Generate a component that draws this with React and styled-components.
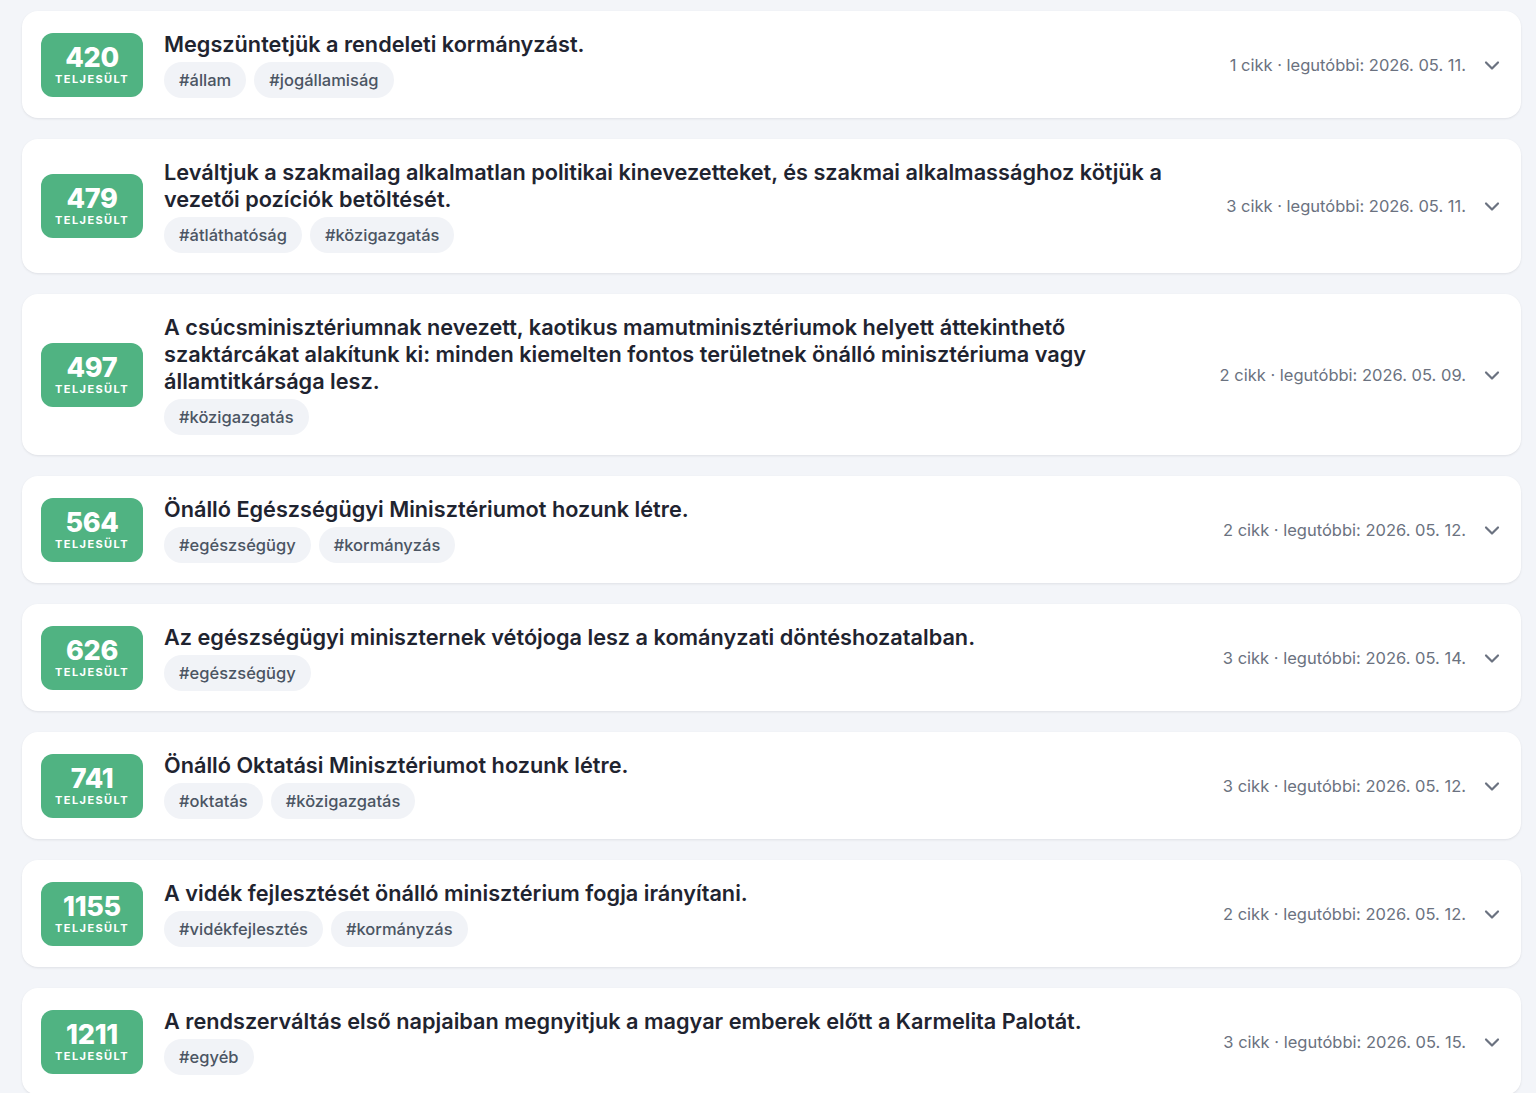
import React from "react";
import styled, { createGlobalStyle } from "styled-components";

const GlobalStyle = createGlobalStyle`
  html, body {
    margin: 0;
    padding: 0;
    background: #f3f5f9;
    font-family: Inter, "Noto Sans", "Liberation Sans", sans-serif;
    -webkit-font-smoothing: antialiased;
  }
`;

const List = styled.div`
  display: flex;
  flex-direction: column;
  gap: 21px;
  padding: 11px 15px 24px 22px;
`;

const Card = styled.div`
  display: flex;
  align-items: center;
  background: #ffffff;
  border-radius: 16px;
  box-shadow: 0 1px 3px rgba(16, 24, 40, 0.06), 0 1px 2px rgba(16, 24, 40, 0.03);
  padding: 20px 17px 20px 19px;
`;

const Badge = styled.div`
  flex: none;
  width: 102px;
  height: 64px;
  border-radius: 12px;
  background: #50b382;
  color: #ffffff;
  display: flex;
  flex-direction: column;
  align-items: center;
  justify-content: center;
`;

const BadgeNumber = styled.div`
  font-size: 27px;
  font-weight: 800;
  line-height: 27px;
  letter-spacing: -0.3px;
`;

const BadgeLabel = styled.div`
  font-size: 11px;
  font-weight: 700;
  letter-spacing: 1.4px;
  line-height: 13px;
  margin-top: 2px;
`;

const Body = styled.div`
  flex: 1;
  min-width: 0;
  margin-left: 21px;
  display: flex;
  flex-direction: column;
  gap: 4px;
`;

const Title = styled.div`
  font-size: 21.7px;
  font-weight: 600;
  line-height: 27px;
  color: #1f2430;
`;

const Tags = styled.div`
  display: flex;
  flex-wrap: wrap;
  gap: 8px;
`;

const Tag = styled.span`
  display: inline-flex;
  align-items: center;
  height: 36px;
  padding: 0 15px;
  border-radius: 18px;
  background: #f1f3f7;
  color: #4b5563;
  font-size: 16.5px;
  font-weight: 500;
`;

const Meta = styled.div`
  flex: none;
  margin-left: 40px;
  font-size: 16.5px;
  color: #6b7280;
  white-space: nowrap;
`;

const Chevron = styled.svg`
  flex: none;
  margin-left: 14px;
  width: 24px;
  height: 24px;
  color: #6b7280;
`;

const items = [
  { n: 420, title: "Megszüntetjük a rendeleti kormányzást.", tags: ["állam", "jogállamiság"], count: 1, date: "2026. 05. 11." },
  { n: 479, title: "Leváltjuk a szakmailag alkalmatlan politikai kinevezetteket, és szakmai alkalmassághoz kötjük a vezetői pozíciók betöltését.", tags: ["átláthatóság", "közigazgatás"], count: 3, date: "2026. 05. 11." },
  { n: 497, title: "A csúcsminisztériumnak nevezett, kaotikus mamutminisztériumok helyett áttekinthető szaktárcákat alakítunk ki: minden kiemelten fontos területnek önálló minisztériuma vagy államtitkársága lesz.", tags: ["közigazgatás"], count: 2, date: "2026. 05. 09." },
  { n: 564, title: "Önálló Egészségügyi Minisztériumot hozunk létre.", tags: ["egészségügy", "kormányzás"], count: 2, date: "2026. 05. 12." },
  { n: 626, title: "Az egészségügyi miniszternek vétójoga lesz a kományzati döntéshozatalban.", tags: ["egészségügy"], count: 3, date: "2026. 05. 14." },
  { n: 741, title: "Önálló Oktatási Minisztériumot hozunk létre.", tags: ["oktatás", "közigazgatás"], count: 3, date: "2026. 05. 12." },
  { n: 1155, title: "A vidék fejlesztését önálló minisztérium fogja irányítani.", tags: ["vidékfejlesztés", "kormányzás"], count: 2, date: "2026. 05. 12." },
  { n: 1211, title: "A rendszerváltás első napjaiban megnyitjuk a magyar emberek előtt a Karmelita Palotát.", tags: ["egyéb"], count: 3, date: "2026. 05. 15." },
];

function PromiseCard({ item }) {
  return (
    <Card>
      <Badge>
        <BadgeNumber>{item.n}</BadgeNumber>
        <BadgeLabel>TELJESÜLT</BadgeLabel>
      </Badge>
      <Body>
        <Title>{item.title}</Title>
        <Tags>
          {item.tags.map((t) => (
            <Tag key={t}>#{t}</Tag>
          ))}
        </Tags>
      </Body>
      <Meta>
        {item.count} cikk · legutóbbi: {item.date}
      </Meta>
      <Chevron viewBox="0 0 24 24" fill="none" stroke="currentColor" strokeWidth="2.2" strokeLinecap="round" strokeLinejoin="round">
        <path d="M6 9.5l6 6 6-6" />
      </Chevron>
    </Card>
  );
}

export default function App() {
  return (
    <>
      <GlobalStyle />
      <List>
        {items.map((item) => (
          <PromiseCard key={item.n} item={item} />
        ))}
      </List>
    </>
  );
}
